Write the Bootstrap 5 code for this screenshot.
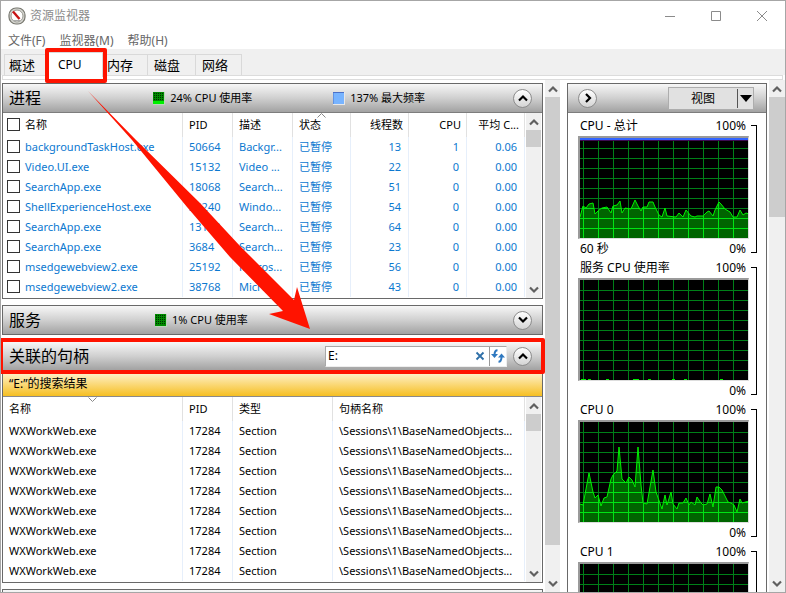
<!DOCTYPE html>
<html lang="zh-CN">
<head>
<meta charset="utf-8">
<meta name="viewport" content="width=device-width, initial-scale=1">
<title>资源监视器</title>
<link rel="stylesheet" href="https://cdn.jsdelivr.net/npm/bootstrap@5.3.0/dist/css/bootstrap.min.css">
<style>
body{font-family:"Noto Sans","Noto Sans CJK SC",sans-serif;font-size:12px;line-height:20px;color:#000;background:#fff}
button{font:inherit;color:inherit;background:none;border:0;padding:0}
svg{display:block;flex:none}
.win{height:100vh;border:1px solid #a6a6a6;position:relative}
.titlebar{height:29px;color:#8b8b8b;padding-left:7px}
.winctl button{width:46px;height:29px;display:grid;place-items:center}
.menubar{height:19px;line-height:22px;color:#666;padding-left:7px;gap:14px}
.menubar a{color:inherit;text-decoration:none}
.tabstrip{height:26px;background:#f0f0f0;padding:5px 0 0 3px;font-size:13px}
.tabstrip button{height:21px;border:1px solid #d9d9d9;border-bottom:0;border-left:0;padding:0 6px;width:48px;text-align:left;line-height:20px}
.tabstrip button:first-child{border-left:1px solid #d9d9d9;padding-left:4px;width:45px}
.tabstrip button:last-child{width:46px}
.tabstrip button.picked{width:54px;height:25px;margin-top:-2px;background:#fff;padding-left:9px;font-size:12px;position:relative;z-index:2}
.tabstrip button.after-picked{width:45px;padding-left:4px}
.picked::after,.marked::after{content:"";position:absolute;border:4px solid #ff1300;border-radius:2px;pointer-events:none}
.picked::after{inset:-5px -5px -6px -4px}
.marked{position:relative}
.marked::after{inset:-4px -3px -4px -4px;z-index:3}
.tabline{height:5px;border:1px solid #dcdcdc;margin:0 2px 0 1px}
.leftpane{padding:3px 2px 0 1px;gap:6px}
.panel{border:1px solid #696969;background:#fff;flex:none}
.bar{height:29px;border-bottom:1px solid #7d7d7d;background:linear-gradient(#f7f7f7,#d0d0d0 50%,#a2a2a2);padding:0 10px 0 6px;font-size:11px}
.bar.slim{padding-right:12px}
.panel.closed .bar{height:28px;border:0}
.bar h2{font-size:16px;font-weight:400;line-height:28px;margin:0;width:146px}
.bar .meter{width:182px;gap:5px}
.round{width:19px;height:19px;border-radius:50%;border:1px solid #8c8c8c;background:linear-gradient(#fff,#d4d4d4);display:grid;place-items:center;flex:none}
.yellow{height:26px;line-height:25px;background:linear-gradient(#fff6da,#f6bf22);border-bottom:1px solid #8a8a8a;padding-left:6px}
.sheet{table-layout:fixed;width:100%;font-size:11px;line-height:20px;border-collapse:separate;border-spacing:0;margin-bottom:1px}
.sheet th{font-weight:400;height:24px;border-right:1px solid #e1e1e1;position:relative}
.sheet td{height:20px;border-right:1px solid #e6effb}
.sheet th,.sheet td{padding:0 6px;white-space:nowrap;overflow:hidden}
.sheet .num{text-align:right;padding-right:5px}
.sheet.procs td{color:#0b78d0}
.sheet.procs td.num{padding-right:7px}
.sheet th:first-child,.sheet td:first-child{padding-left:4px}
.sheet.handles th:first-child,.sheet.handles td:first-child{padding-left:6px}
.c50{width:50px}.c60{width:60px}.c58{width:58px}.c100{width:100px}.c192{width:192px}
.tick{appearance:none;width:13px;height:13px;border:1px solid #333;background:#fff;margin:0 5px 0 0;vertical-align:-2px}
.sorter{position:absolute;top:0;left:50%;margin-left:-5px}
.scroller{width:15px;background:#f0f0f0;flex:none}
.panel .scroller{margin:0 1px}
.scroller button{height:17px;width:100%;display:grid;place-items:center}
.scroller .thumb{background:#cdcdcd;height:17px}
.leftscroll .thumb{flex:0 1 448px}
.rightscroll{width:16px}
.rightscroll .thumb{height:120px}
.splitter{width:1px;background:#555;margin:0 6px 0 1px}
.rightpane{width:202px;padding:3px 2px 0 0;flex:none}
.search{width:182px;height:21px;margin-right:6px;background:#fff;border:1px solid #a8a8a8;border-right-color:#eee;border-bottom-color:#eee}
.search input{border:0;outline:0;padding:0 2px;font-size:12px;line-height:18px;min-width:0}
.search .go{border-left:1px solid #999;width:20px;height:19px;display:grid;place-items:center}
.viewbtn{background:#e1e1e1;border:1px solid #adadad;width:86px;height:23px;font-size:12px;line-height:21px}
.viewbtn i{border-left:1px solid #555;height:19px;padding-left:1px}
.graphs{padding-top:3px}
.graph{height:142px;padding:0 9px 0 10px}
.graph .cap{height:20px;padding:0 3px 0 2px}
.plot{border:2px solid #9a9a9a;border-right:1px solid #ddd;border-bottom:1px solid #ddd;height:103px;background:#000}
.plot svg{width:100%;height:100px}
.bracket{width:6px;height:128px;margin:9px 0 0 2px;border:1px solid #000;border-left:0}
.arrow{position:absolute;left:0;top:0;z-index:5;pointer-events:none}
</style>
</head>
<body>
<svg width="0" height="0" class="position-absolute" aria-hidden="true">
  <defs>
    <path id="lines" d="M3.500 0v100m15-100v100m15-100v100m15-100v100m15-100v100m15-100v100m15-100v100m15-100v100m15-100v100m15-100v100m15-100v100M0 10.500h168m-168 10h168m-168 10h168m-168 10h168m-168 10h168m-168 10h168m-168 10h168m-168 10h168m-168 10h168" fill="none"/>
    <path id="total" d="M-1 101V79H0L3 68 6 70 9 66 13 65 15 76 19 72 22 70 27 69 31 75 33 68 37 67 40 63 42 75 45 70 51 71 55 62 58 68 61 73 63 69H67L69 64H73L75 69 79 77 82 79 85 70 87 78 96 79 99 75 103 79 106 72 111 78 115 79 117 78H123L127 74 129 73 133 78 135 72 139 64 141 66 145 71 150 74 153 79H157L160 72 163 77 166 75 169 76V101z"/>
    <path id="core0" d="M-1 101V82H0L3 83 9 51 13 70 15 76 18 73 21 84 24 76 27 75 31 57 33 53 37 49 39 25 42 57 46 61 49 55 52 58 55 65 58 25 61 63 63 81 67 82 73 48 76 70 82 87 85 73 87 83 91 70 93 82 97 87 99 81H103L106 76 109 83 111 80 115 83 117 75 121 81 123 83 127 82 130 72 133 85 136 65H139L142 68 148 80 151 81 154 83 157 90 160 77 162 81 169 79V101z"/>
    <clipPath id="totalClip"><use href="#total"/></clipPath>
    <clipPath id="core0Clip"><use href="#core0"/></clipPath>
    <symbol id="up" viewBox="0 0 10 8"><path d="M1 6.500 5 2.500 9 6.500" fill="none" stroke="currentColor" stroke-width="2.200"/></symbol>
    <symbol id="down" viewBox="0 0 10 8"><path d="M1 1.500 5 5.500 9 1.500" fill="none" stroke="currentColor" stroke-width="2.200"/></symbol>
    <symbol id="dots" viewBox="0 0 12 13"><path d="M0 0h12v13H0z" fill="#b8d8b8"/><path d="M0 0h11v12H0z" fill="#008a00"/><path d="M1 1.500h10M1 3.500h10M1 5.500h10M1 7.500h10M1 9.500h10" stroke="#002c00" stroke-dasharray="1 1"/></symbol>
  </defs>
</svg>
<div class="win d-flex flex-column overflow-hidden">
  <header class="titlebar d-flex align-items-center flex-shrink-0">
    <svg width="18" height="18" viewBox="0 0 18 18" class="me-1" aria-hidden="true"><rect x="1" y="1" width="16" height="16" rx="7" fill="#d5d5d0" stroke="#77776f" stroke-width="1.200"/><circle cx="9" cy="9" r="6" fill="#fff" stroke="#9a9a92"/><path d="M5 4.500 11.500 12" stroke="#c81414" stroke-width="2.400"/><path d="M6 13.500h6" stroke="#aaa"/></svg>
    <span class="flex-grow-1">资源监视器</span>
    <div class="winctl d-flex">
      <button aria-label="最小化"><svg width="10" height="10"><path d="M0 5.500h10" stroke="#8b8b8b"/></svg></button>
      <button aria-label="最大化"><svg width="10" height="10"><path d="M.5.5h9v9h-9z" fill="none" stroke="#8b8b8b"/></svg></button>
      <button aria-label="关闭"><svg width="10" height="10"><path d="m0 0 10 10M10 0 0 10" stroke="#8b8b8b"/></svg></button>
    </div>
  </header>
  <nav class="menubar d-flex flex-shrink-0"><a href="#">文件(F)</a><a href="#">监视器(M)</a><a href="#">帮助(H)</a></nav>
  <div class="tabstrip d-flex flex-shrink-0" role="tablist">
    <button role="tab">概述</button><button role="tab" class="picked" aria-selected="true">CPU</button><button role="tab" class="after-picked">内存</button><button role="tab">磁盘</button><button role="tab">网络</button>
  </div>
  <div class="tabline flex-shrink-0"></div>
  <main class="d-flex flex-grow-1 overflow-hidden">
    <div class="leftpane d-flex flex-column flex-grow-1 overflow-hidden">
      <section class="panel">
        <div class="bar d-flex align-items-center">
          <h2>进程</h2>
          <span class="meter d-flex align-items-center"><svg width="12" height="13"><use href="#dots"/><path d="M0 9h11v3H0z" fill="#00f000"/></svg>24% CPU 使用率</span>
          <span class="meter d-flex align-items-center me-auto"><svg width="12" height="13"><path d="M0 0h12v13H0z" fill="#e8e8e8"/><path d="M0 0h11v12H0z" fill="#78b4ff"/><path d="M0 12V.5h11" fill="none" stroke="#4a70c8"/></svg>137% 最大频率</span>
          <button class="round" aria-label="折叠"><svg width="10" height="8"><use href="#up"/></svg></button>
        </div>
        <div class="d-flex">
          <table class="sheet procs">
            <colgroup><col><col class="c50"><col class="c60"><col class="c58"><col class="c58"><col class="c58"><col class="c58"></colgroup>
            <thead><tr><th><input type="checkbox" class="tick" aria-label="全选">名称</th><th>PID</th><th>描述</th><th>状态<svg class="sorter" width="9" height="5"><path d="m.5 4.500 4-4 4 4" fill="none" stroke="#888"/></svg></th><th class="num">线程数</th><th class="num">CPU</th><th class="num">平均 C...</th></tr></thead>
            <tbody>
              <tr><td><label><input type="checkbox" class="tick">backgroundTaskHost.exe</label></td><td>50664</td><td>Backgr...</td><td>已暂停</td><td class="num">13</td><td class="num">1</td><td class="num">0.06</td></tr>
              <tr><td><label><input type="checkbox" class="tick">Video.UI.exe</label></td><td>15132</td><td>Video ...</td><td>已暂停</td><td class="num">22</td><td class="num">0</td><td class="num">0.00</td></tr>
              <tr><td><label><input type="checkbox" class="tick">SearchApp.exe</label></td><td>18068</td><td>Search...</td><td>已暂停</td><td class="num">51</td><td class="num">0</td><td class="num">0.00</td></tr>
              <tr><td><label><input type="checkbox" class="tick">ShellExperienceHost.exe</label></td><td>23240</td><td>Windo...</td><td>已暂停</td><td class="num">54</td><td class="num">0</td><td class="num">0.00</td></tr>
              <tr><td><label><input type="checkbox" class="tick">SearchApp.exe</label></td><td>13152</td><td>Search...</td><td>已暂停</td><td class="num">64</td><td class="num">0</td><td class="num">0.00</td></tr>
              <tr><td><label><input type="checkbox" class="tick">SearchApp.exe</label></td><td>3684</td><td>Search...</td><td>已暂停</td><td class="num">23</td><td class="num">0</td><td class="num">0.00</td></tr>
              <tr><td><label><input type="checkbox" class="tick">msedgewebview2.exe</label></td><td>25192</td><td>Micros...</td><td>已暂停</td><td class="num">56</td><td class="num">0</td><td class="num">0.00</td></tr>
              <tr><td><label><input type="checkbox" class="tick">msedgewebview2.exe</label></td><td>38768</td><td>Micros...</td><td>已暂停</td><td class="num">43</td><td class="num">0</td><td class="num">0.00</td></tr>
            </tbody>
          </table>
          <div class="scroller d-flex flex-column"><button aria-label="向上"><svg width="10" height="8" color="#606060"><use href="#up"/></svg></button><div class="thumb"></div><button class="mt-auto" aria-label="向下"><svg width="10" height="8" color="#606060"><use href="#down"/></svg></button></div>
        </div>
      </section>
      <section class="panel closed">
        <div class="bar d-flex align-items-center">
          <h2>服务</h2>
          <span class="meter d-flex align-items-center me-auto"><svg width="12" height="13"><use href="#dots"/></svg>1% CPU 使用率</span>
          <button class="round" aria-label="展开"><svg width="10" height="8"><use href="#down"/></svg></button>
        </div>
      </section>
      <section class="panel">
        <div class="bar marked d-flex align-items-center">
          <h2 class="me-auto">关联的句柄</h2>
          <div class="search d-flex align-items-center">
            <input type="text" class="flex-grow-1" value="E:" aria-label="搜索句柄">
            <button class="me-1" aria-label="清除"><svg width="10" height="10"><path d="m1.500 1.500 7 7M8.500 1.500l-7 7" stroke="#2e6fa8" stroke-width="1.800"/></svg></button>
            <button class="go" aria-label="刷新"><svg width="14" height="14" viewBox="0 0 14 14"><path d="M0 5h7L3.500 9zM7 8.500h7L10.500 4.500z" fill="#2e78c0"/><path d="M6.500 1.200C4.300 1.200 3.500 3 3.500 6M7.500 12.800c2.200 0 3-1.800 3-5" fill="none" stroke="#2e78c0" stroke-width="2"/></svg></button>
          </div>
          <button class="round" aria-label="折叠"><svg width="10" height="8"><use href="#up"/></svg></button>
        </div>
        <div class="yellow">“E:”的搜索结果</div>
        <div class="d-flex">
          <table class="sheet handles">
            <colgroup><col><col class="c50"><col class="c100"><col class="c192"></colgroup>
            <thead><tr><th>名称<svg class="sorter" width="9" height="5"><path d="m.5.5 4 4 4-4" fill="none" stroke="#888"/></svg></th><th>PID</th><th>类型</th><th>句柄名称</th></tr></thead>
            <tbody>
              <tr><td>WXWorkWeb.exe</td><td>17284</td><td>Section</td><td>\Sessions\1\BaseNamedObjects...</td></tr>
              <tr><td>WXWorkWeb.exe</td><td>17284</td><td>Section</td><td>\Sessions\1\BaseNamedObjects...</td></tr>
              <tr><td>WXWorkWeb.exe</td><td>17284</td><td>Section</td><td>\Sessions\1\BaseNamedObjects...</td></tr>
              <tr><td>WXWorkWeb.exe</td><td>17284</td><td>Section</td><td>\Sessions\1\BaseNamedObjects...</td></tr>
              <tr><td>WXWorkWeb.exe</td><td>17284</td><td>Section</td><td>\Sessions\1\BaseNamedObjects...</td></tr>
              <tr><td>WXWorkWeb.exe</td><td>17284</td><td>Section</td><td>\Sessions\1\BaseNamedObjects...</td></tr>
              <tr><td>WXWorkWeb.exe</td><td>17284</td><td>Section</td><td>\Sessions\1\BaseNamedObjects...</td></tr>
              <tr><td>WXWorkWeb.exe</td><td>17284</td><td>Section</td><td>\Sessions\1\BaseNamedObjects...</td></tr>
            </tbody>
          </table>
          <div class="scroller d-flex flex-column"><button aria-label="向上"><svg width="10" height="8" color="#606060"><use href="#up"/></svg></button><div class="thumb"></div><button class="mt-auto" aria-label="向下"><svg width="10" height="8" color="#606060"><use href="#down"/></svg></button></div>
        </div>
      </section>
      <section class="panel closed"><div class="bar"></div></section>
    </div>
    <div class="scroller leftscroll d-flex flex-column"><button aria-label="向上"><svg width="10" height="8" color="#606060"><use href="#up"/></svg></button><div class="thumb"></div><button class="mt-auto" aria-label="向下"><svg width="10" height="8" color="#606060"><use href="#down"/></svg></button></div>
    <div class="splitter"></div>
    <aside class="rightpane">
      <div class="panel">
        <div class="bar slim d-flex align-items-center justify-content-between">
          <button class="round ms-1" aria-label="隐藏图表"><svg width="8" height="10"><path d="m2 1 4 4-4 4" fill="none" stroke="#000" stroke-width="2.200"/></svg></button>
          <button class="viewbtn d-flex align-items-center"><span class="flex-grow-1 text-center">视图</span><i class="d-flex align-items-center"><svg width="14" height="7"><path d="M1 0h12L7 7z"/></svg></i></button>
        </div>
        <div class="graphs">
        <div class="graph d-flex">
          <div class="flex-grow-1">
            <div class="cap d-flex justify-content-between"><span>CPU - 总计</span><span>100%</span></div>
            <div class="plot"><svg viewBox="0 0 168 100" preserveAspectRatio="none"><use href="#lines" stroke="#008018"/><g clip-path="url(#totalClip)"><path d="M0 0h168v100H0z" fill="#006400"/><use href="#lines" stroke="#00e414"/></g><use href="#total" fill="none" stroke="#00f000"/><path d="M0 0h168v2H0z" fill="#3264ff"/><path d="M0 2h168v1H0z" fill="#3c0a50"/></svg></div>
            <div class="cap d-flex justify-content-between"><span>60 秒</span><span>0%</span></div>
          </div>
          <div class="bracket"></div>
        </div>
        <div class="graph d-flex">
          <div class="flex-grow-1">
            <div class="cap d-flex justify-content-between"><span>服务 CPU 使用率</span><span>100%</span></div>
            <div class="plot"><svg viewBox="0 0 168 100" preserveAspectRatio="none"><use href="#lines" stroke="#008018"/><path d="M1 99.500h5m2 0h3m15 0h3m24 0h6m9 0h3m21 0h3m9 0h3m33 0h3" stroke="#00f000"/></svg></div>
            <div class="cap text-end">0%</div>
          </div>
          <div class="bracket"></div>
        </div>
        <div class="graph d-flex">
          <div class="flex-grow-1">
            <div class="cap d-flex justify-content-between"><span>CPU 0</span><span>100%</span></div>
            <div class="plot"><svg viewBox="0 0 168 100" preserveAspectRatio="none"><use href="#lines" stroke="#008018"/><g clip-path="url(#core0Clip)"><path d="M0 0h168v100H0z" fill="#006400"/><use href="#lines" stroke="#00e414"/></g><use href="#core0" fill="none" stroke="#00f000"/></svg></div>
            <div class="cap text-end">0%</div>
          </div>
          <div class="bracket"></div>
        </div>
        <div class="graph d-flex">
          <div class="flex-grow-1">
            <div class="cap d-flex justify-content-between"><span>CPU 1</span><span>100%</span></div>
            <div class="plot"><svg viewBox="0 0 168 100" preserveAspectRatio="none"><use href="#lines" stroke="#008018"/></svg></div>
          </div>
          <div class="bracket"></div>
        </div>
        </div>
      </div>
    </aside>
    <div class="scroller rightscroll d-flex flex-column"><button aria-label="向上"><svg width="10" height="8" color="#606060"><use href="#up"/></svg></button><div class="thumb"></div><button class="mt-auto" aria-label="向下"><svg width="10" height="8" color="#606060"><use href="#down"/></svg></button></div>
  </main>
  <svg class="arrow" width="320" height="335" aria-hidden="true"><path d="M87 90 135 139 199 202 239 245 293 299 296 286 309 328 268 313 282 310 229 256 186 206 131 139z" fill="#ff1300"/></svg>
</div>
<script src="https://cdn.jsdelivr.net/npm/bootstrap@5.3.0/dist/js/bootstrap.bundle.min.js"></script>
</body>
</html>
